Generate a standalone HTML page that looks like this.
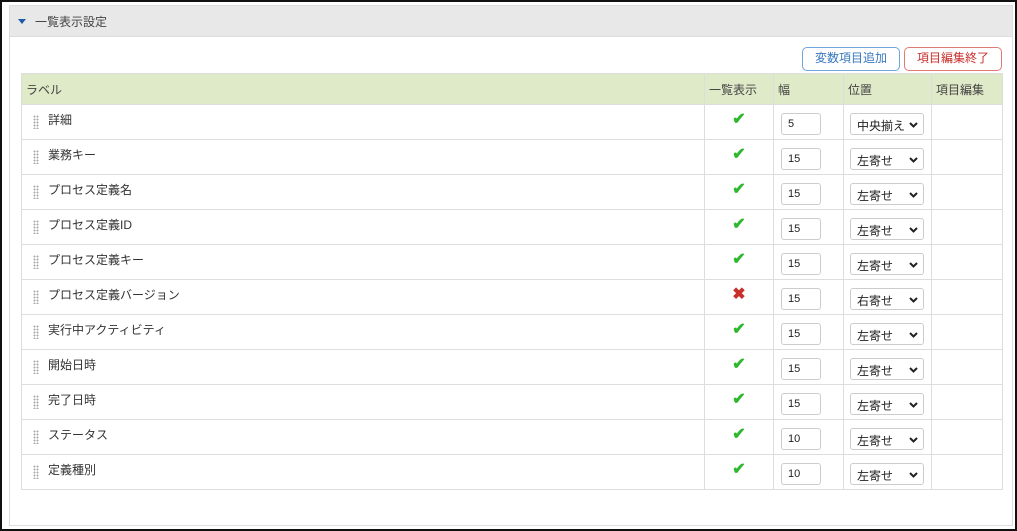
<!DOCTYPE html>
<html><head><meta charset="utf-8"><style>
*{box-sizing:border-box;margin:0;padding:0}
body{width:1017px;height:531px;background:#fff;font-family:"Liberation Sans","Noto Sans CJK JP",sans-serif;font-size:12px;color:#333;position:relative;overflow:hidden}
.outer{position:absolute;left:0;top:0;width:1017px;height:531px;border:2px solid #111}
.panel{position:absolute;left:9px;top:5px;width:1004px;height:521px;border:1px solid #ddd}
.hdr{position:absolute;left:0;top:0;right:0;height:31px;background:#e8e8e8;border-bottom:1px solid #ddd}
.hdr .tri{position:absolute;left:8px;top:13px;width:0;height:0;border-left:4px solid transparent;border-right:4px solid transparent;border-top:5px solid #1f5aa6}
.hdr span{position:absolute;left:25px;top:7px;font-size:12px;color:#444}
.btn{position:absolute;top:47px;height:24px;border-radius:5px;background:#fff;font-size:12px;text-align:center;line-height:21px}
.b1{left:802px;width:98px;border:1px solid #6fa6dc;color:#3a78bd}
.b2{left:904px;width:98px;border:1px solid #e07a76;color:#c9302c}
table{position:absolute;left:21px;top:73px;border-collapse:collapse;width:981px;table-layout:fixed}
td,th{border:1px solid #ddd;font-weight:normal;text-align:left;padding:0 4px;vertical-align:middle}
th{background:#dfeac8;height:31px;color:#444;font-size:12px}
td{height:35px;position:relative}
.lbl{padding-left:26px;vertical-align:top;padding-top:6px}
.grip{position:absolute;left:11px;top:10px;width:6px;height:14px;background-image:radial-gradient(circle,#aaa 0.9px,transparent 1.1px);background-size:3px 3px}
.c{text-align:center;vertical-align:top;padding-top:4px}
.ok{color:#2eb82e;font-size:16px;font-weight:bold}
.ng{color:#c9302c;font-size:16px;font-weight:bold}
.inp{position:absolute;left:7px;top:8px;width:40px;height:22px;border:1px solid #ccc;border-radius:3px;padding:4px 0 0 6px;font-size:11px;color:#222}
.sel{position:absolute;left:6px;top:8px;width:74px;height:22px;border:1px solid #ccc;border-radius:3px;padding:3px 0 0 6px;font-size:12px;color:#222}
.sel svg{position:absolute;right:5px;top:8px}
</style></head><body>
<div class="outer"></div>
<div class="panel"><div class="hdr"><div class="tri"></div><span>一覧表示設定</span></div></div>
<div class="btn b1">変数項目追加</div>
<div class="btn b2">項目編集終了</div>
<table>
<colgroup><col style="width:683px"><col style="width:69px"><col style="width:70px"><col style="width:88px"><col style="width:71px"></colgroup>
<tr><th>ラベル</th><th>一覧表示</th><th>幅</th><th>位置</th><th>項目編集</th></tr>
<tr><td class="lbl"><div class="grip"></div>詳細</td><td class="c"><span class="ok">✔</span></td><td><div class="inp">5</div></td><td><div class="sel">中央揃え<svg width="9" height="6"><path d="M1 1L4.5 4.5L8 1" stroke="#222" stroke-width="2" fill="none"/></svg></div></td><td></td></tr>
<tr><td class="lbl"><div class="grip"></div>業務キー</td><td class="c"><span class="ok">✔</span></td><td><div class="inp">15</div></td><td><div class="sel">左寄せ<svg width="9" height="6"><path d="M1 1L4.5 4.5L8 1" stroke="#222" stroke-width="2" fill="none"/></svg></div></td><td></td></tr>
<tr><td class="lbl"><div class="grip"></div>プロセス定義名</td><td class="c"><span class="ok">✔</span></td><td><div class="inp">15</div></td><td><div class="sel">左寄せ<svg width="9" height="6"><path d="M1 1L4.5 4.5L8 1" stroke="#222" stroke-width="2" fill="none"/></svg></div></td><td></td></tr>
<tr><td class="lbl"><div class="grip"></div>プロセス定義ID</td><td class="c"><span class="ok">✔</span></td><td><div class="inp">15</div></td><td><div class="sel">左寄せ<svg width="9" height="6"><path d="M1 1L4.5 4.5L8 1" stroke="#222" stroke-width="2" fill="none"/></svg></div></td><td></td></tr>
<tr><td class="lbl"><div class="grip"></div>プロセス定義キー</td><td class="c"><span class="ok">✔</span></td><td><div class="inp">15</div></td><td><div class="sel">左寄せ<svg width="9" height="6"><path d="M1 1L4.5 4.5L8 1" stroke="#222" stroke-width="2" fill="none"/></svg></div></td><td></td></tr>
<tr><td class="lbl"><div class="grip"></div>プロセス定義バージョン</td><td class="c"><span class="ng">✖</span></td><td><div class="inp">15</div></td><td><div class="sel">右寄せ<svg width="9" height="6"><path d="M1 1L4.5 4.5L8 1" stroke="#222" stroke-width="2" fill="none"/></svg></div></td><td></td></tr>
<tr><td class="lbl"><div class="grip"></div>実行中アクティビティ</td><td class="c"><span class="ok">✔</span></td><td><div class="inp">15</div></td><td><div class="sel">左寄せ<svg width="9" height="6"><path d="M1 1L4.5 4.5L8 1" stroke="#222" stroke-width="2" fill="none"/></svg></div></td><td></td></tr>
<tr><td class="lbl"><div class="grip"></div>開始日時</td><td class="c"><span class="ok">✔</span></td><td><div class="inp">15</div></td><td><div class="sel">左寄せ<svg width="9" height="6"><path d="M1 1L4.5 4.5L8 1" stroke="#222" stroke-width="2" fill="none"/></svg></div></td><td></td></tr>
<tr><td class="lbl"><div class="grip"></div>完了日時</td><td class="c"><span class="ok">✔</span></td><td><div class="inp">15</div></td><td><div class="sel">左寄せ<svg width="9" height="6"><path d="M1 1L4.5 4.5L8 1" stroke="#222" stroke-width="2" fill="none"/></svg></div></td><td></td></tr>
<tr><td class="lbl"><div class="grip"></div>ステータス</td><td class="c"><span class="ok">✔</span></td><td><div class="inp">10</div></td><td><div class="sel">左寄せ<svg width="9" height="6"><path d="M1 1L4.5 4.5L8 1" stroke="#222" stroke-width="2" fill="none"/></svg></div></td><td></td></tr>
<tr><td class="lbl"><div class="grip"></div>定義種別</td><td class="c"><span class="ok">✔</span></td><td><div class="inp">10</div></td><td><div class="sel">左寄せ<svg width="9" height="6"><path d="M1 1L4.5 4.5L8 1" stroke="#222" stroke-width="2" fill="none"/></svg></div></td><td></td></tr>
</table>
</body></html>
